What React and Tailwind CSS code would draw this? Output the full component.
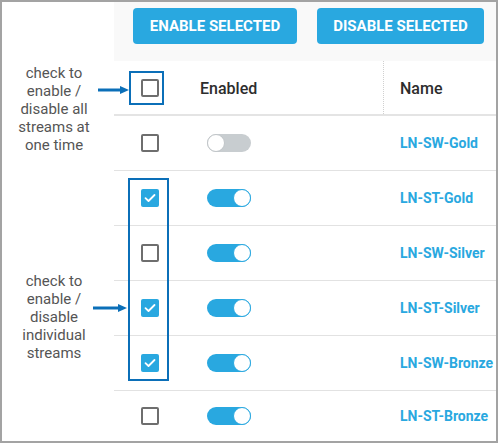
import React from 'react';

const BLUE = 'bg-[#29a8e0]';

const streams = [
  { name: 'LN-SW-Gold', selected: false, enabled: false },
  { name: 'LN-ST-Gold', selected: true, enabled: true },
  { name: 'LN-SW-Silver', selected: false, enabled: true },
  { name: 'LN-ST-Silver', selected: true, enabled: true },
  { name: 'LN-SW-Bronze', selected: true, enabled: true },
  { name: 'LN-ST-Bronze', selected: false, enabled: true },
];

// Ô chọn
function Checkbox({ checked }) {
  if (checked) {
    return (
      <span className={`flex w-[18px] h-[18px] items-center justify-center rounded-[2px] ${BLUE}`}>
        <svg width="12" height="10" viewBox="0 0 12 10" fill="none">
          <path d="M1.5 5.2 L4.5 8 L10.5 2" stroke="white" strokeWidth="1.8" strokeLinecap="round" strokeLinejoin="round" />
        </svg>
      </span>
    );
  }
  return <span className="block w-[18px] h-[18px] rounded-[2px] border-2 border-[#6e6e6e] bg-white" />;
}

// Công tắc bật/tắt
function Toggle({ on }) {
  return (
    <span
      className={`flex w-[44px] h-[18px] rounded-full items-center ${on ? 'bg-[#29a8e0] justify-end' : 'bg-[#c8cdd0] justify-start'}`}
    >
      <span
        className={`block w-[18px] h-[18px] rounded-full bg-white border ${on ? 'border-[#29a8e0]' : 'border-[#c0c5c8]'}`}
      />
    </span>
  );
}

// Mũi tên chú thích
function Arrow({ className, width }) {
  return (
    <svg className={`absolute ${className}`} width={width} height="12" viewBox={`0 0 ${width} 12`}>
      <line x1="0" y1="6" x2={width - 8} y2="6" stroke="#0b6fb8" strokeWidth="3" />
      <polygon points={`${width - 9},2 ${width},6 ${width - 9},10`} fill="#0b6fb8" />
    </svg>
  );
}

export default function App() {
  return (
    <div
      className="relative w-[498px] h-[443px] border-2 border-[#a3a3a3] bg-white flex overflow-hidden"
      style={{ fontFamily: 'Roboto, "Open Sans", sans-serif' }}
    >
      {/* Cột chú thích */}
      <div className="w-[112px] shrink-0 flex flex-col text-[15px] leading-[18px] text-[#555] text-center">
        <div className="w-[104px] mt-[62px]">
          check to<br />enable /<br />disable all<br />streams at<br />one time
        </div>
        <div className="w-[104px] mt-[118px]">
          check to<br />enable /<br />disable<br />individual<br />streams
        </div>
      </div>

      {/* Bảng luồng */}
      <div className="flex-1 flex flex-col">
        <div className="h-[59px] bg-[#f9f9f9] flex items-start gap-[20px] pl-[19px] pt-[6px]">
          <button className={`h-[36px] w-[164px] rounded-[4px] ${BLUE} text-white text-[15px] font-bold`}>
            ENABLE SELECTED
          </button>
          <button className={`h-[36px] w-[167px] rounded-[4px] ${BLUE} text-white text-[15px] font-bold`}>
            DISABLE SELECTED
          </button>
        </div>

        <div className="h-[55px] flex border-b-2 border-[#e4e4e4] text-[16px] font-medium text-[#2d2d2d]">
          <div className="w-[70px] flex items-center justify-center pl-[1px]">
            <Checkbox checked={false} />
          </div>
          <div className="w-[199px] flex items-center pl-[16px] pt-[2px]">Enabled</div>
          <div className="flex-1 flex items-center pl-[16px] pt-[2px] border-l border-dotted border-[#d0d0d0]">Name</div>
        </div>

        {streams.map((s, i) => (
          <div
            key={s.name}
            className={`flex items-center ${i < streams.length - 1 ? 'h-[55px] border-b border-[#e2e2e2]' : 'h-[50px]'}`}
          >
            <div className="w-[70px] flex justify-center pl-[1px]">
              <Checkbox checked={s.selected} />
            </div>
            <div className="w-[199px] pl-[23px]">
              <Toggle on={s.enabled} />
            </div>
            <div className="flex-1 pl-[17px] text-[14px] font-bold text-[#29a8e0]">{s.name}</div>
          </div>
        ))}
      </div>

      {/* Khung và mũi tên chú thích */}
      <div className="absolute left-[127px] top-[69px] w-[35px] h-[34px] border-2 border-[#0b6fb8]" />
      <div className="absolute left-[126px] top-[176px] w-[41px] h-[203px] border-2 border-[#0b6fb8]" />
      <Arrow className="left-[96px] top-[82px]" width={31} />
      <Arrow className="left-[91px] top-[300px]" width={34} />
    </div>
  );
}
